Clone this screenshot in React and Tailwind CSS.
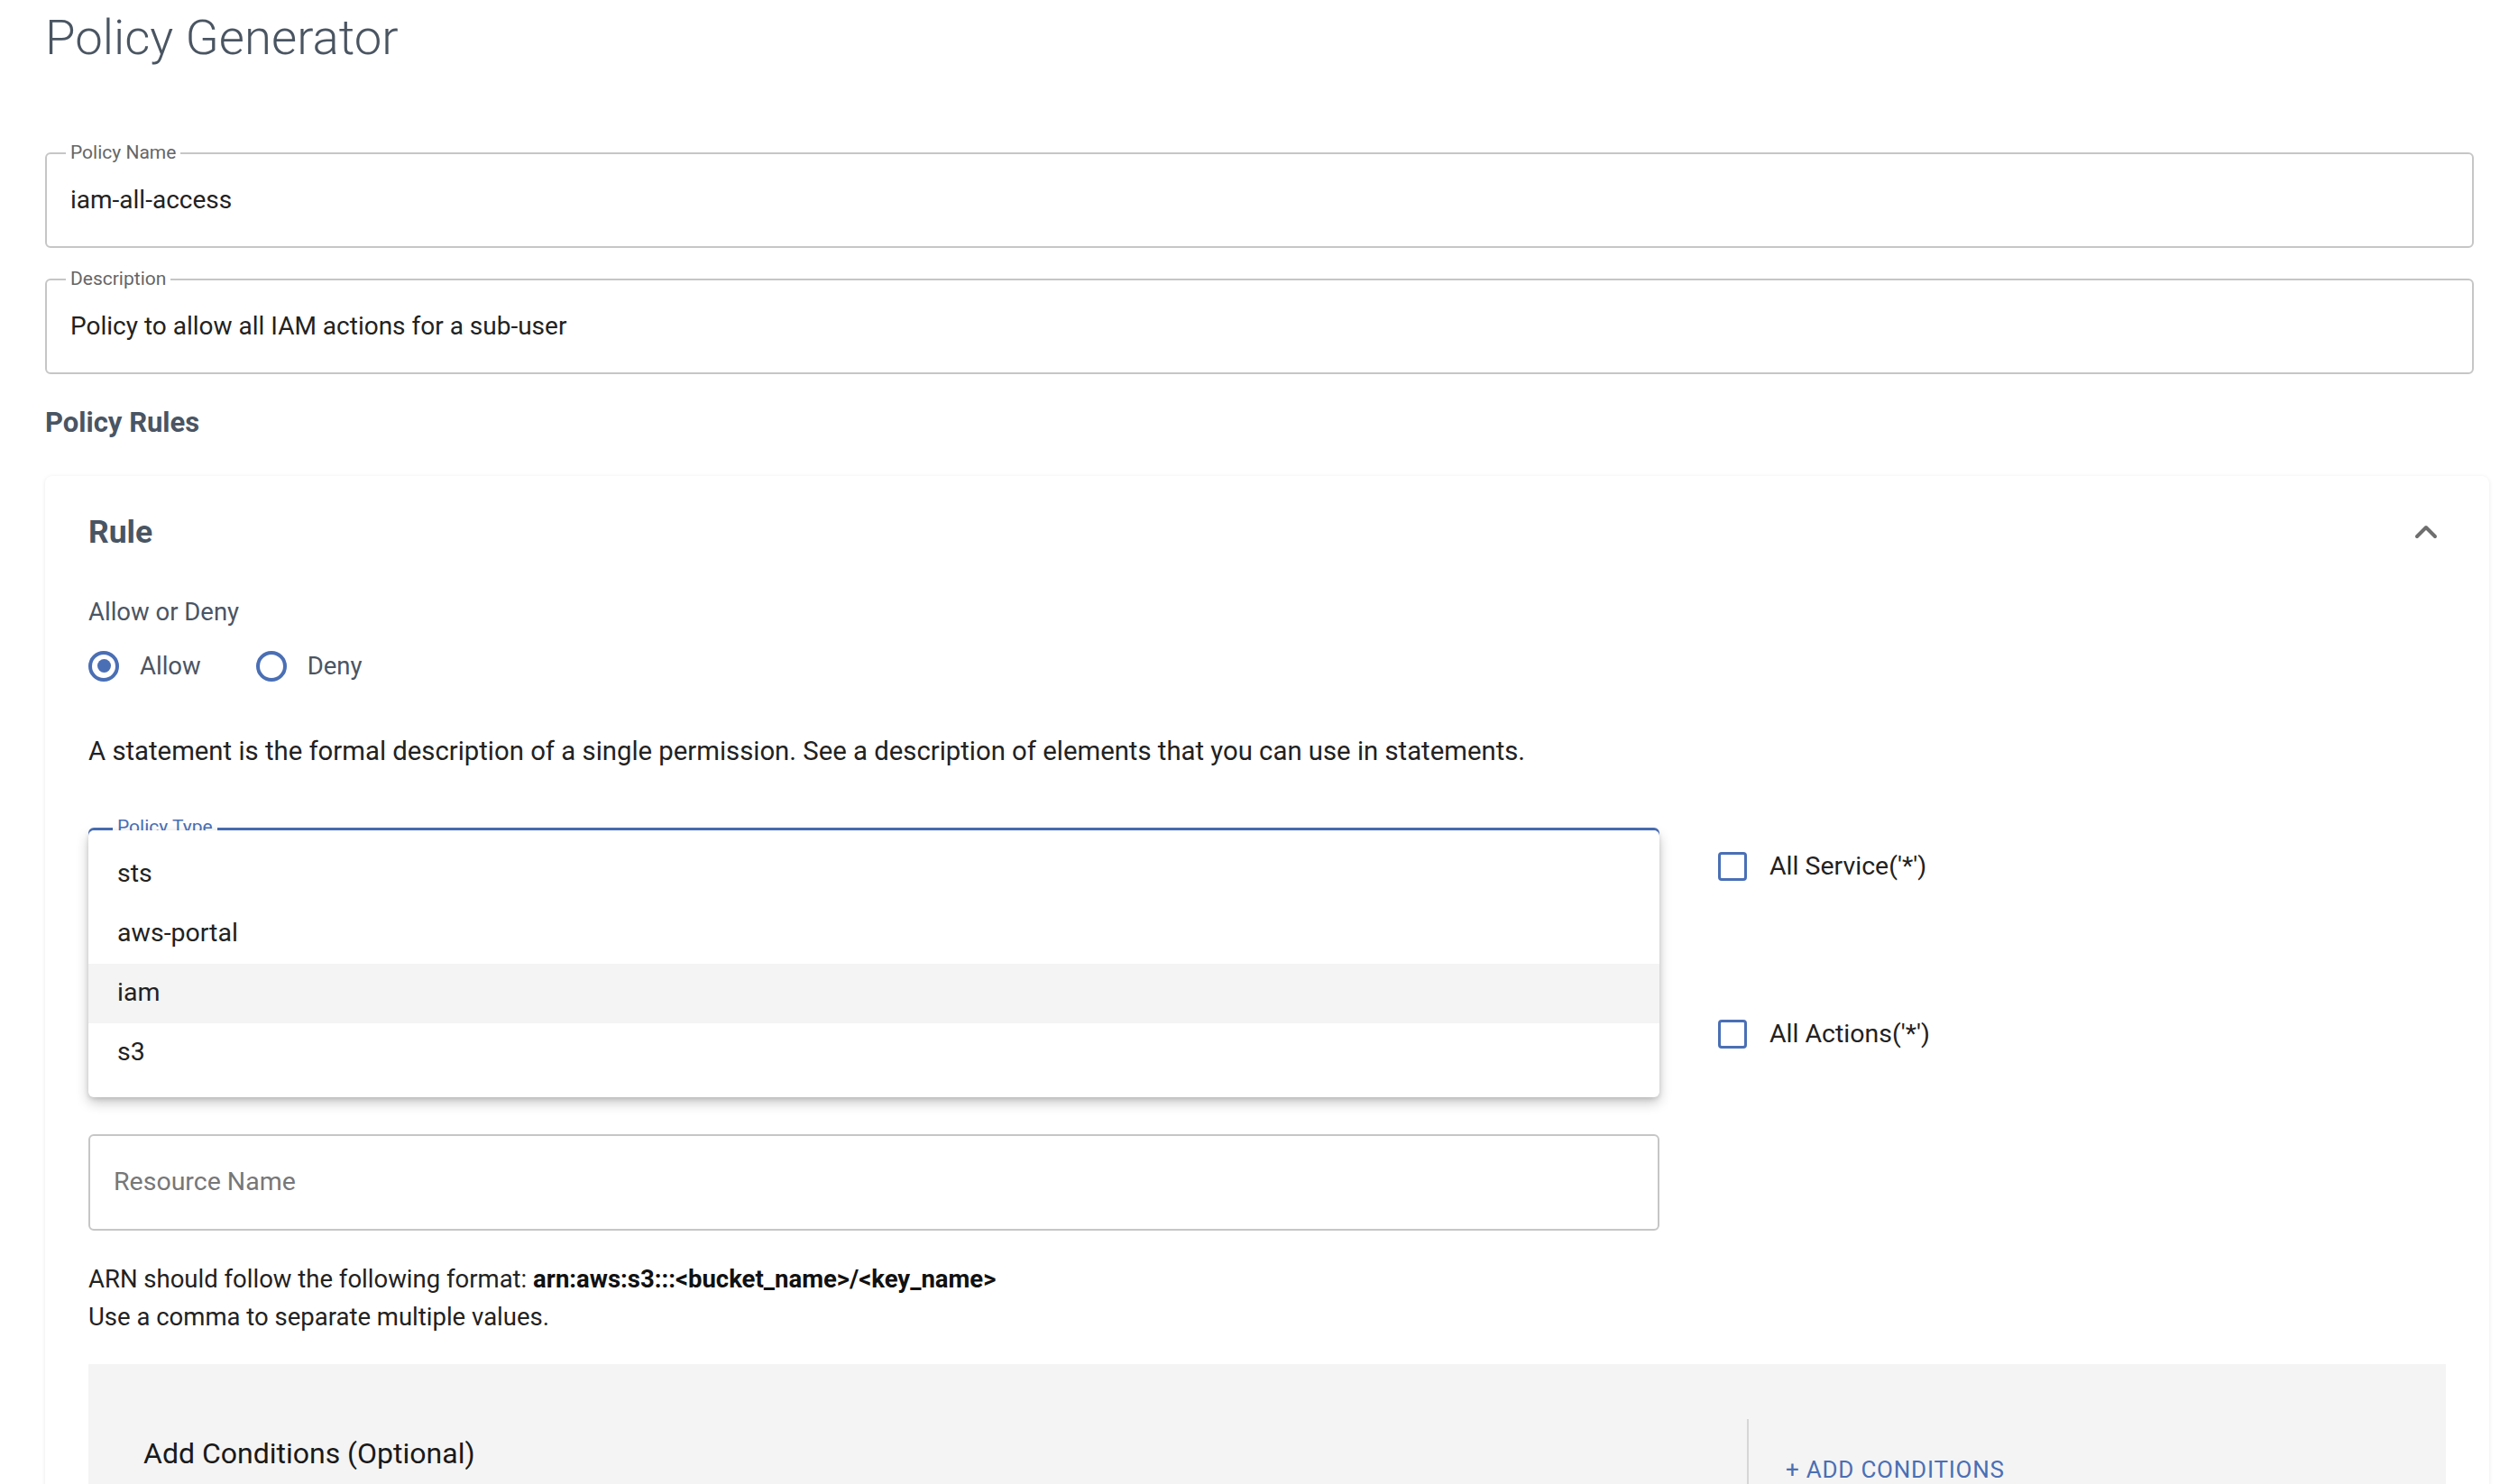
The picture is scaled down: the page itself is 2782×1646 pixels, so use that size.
import { ChevronUp } from 'lucide-react';

function OutlinedField({ label, value, placeholder, className = '' }) {
  return (
    <div className={`relative h-[106px] border-2 border-[#c6c6c6] rounded-[6px] flex items-center px-[26px] ${className}`}>
      {label && (
        <span className="absolute -top-[13px] left-[21px] bg-white px-[5px] text-[21px] leading-[22px] text-[#666]">
          {label}
        </span>
      )}
      {value ? (
        <span className="text-[28px] text-[#222]">{value}</span>
      ) : (
        <span className="text-[28.5px] text-[#777]">{placeholder}</span>
      )}
    </div>
  );
}

function Radio({ checked, label }) {
  return (
    <div className="flex items-center gap-[23px]">
      <span className="w-[34px] h-[34px] rounded-full border-[4px] border-[#4a6fb5] flex items-center justify-center">
        {checked && <span className="w-[15px] h-[15px] rounded-full bg-[#4a6fb5]" />}
      </span>
      <span className="text-[27.5px] leading-none text-[#4b5563]">{label}</span>
    </div>
  );
}

function Check({ label, className = '' }) {
  return (
    <div className={`flex items-center gap-[25px] ${className}`}>
      <span className="w-[32px] h-[32px] rounded-[4px] border-[3px] border-[#4a6fb5]" />
      <span className="text-[28.5px] leading-none text-[#222]">{label}</span>
    </div>
  );
}

export default function App() {
  const options = ['sts', 'aws-portal', 'iam', 's3'];

  return (
    <div className="min-h-screen bg-white pl-[50px] pr-[22px] font-['Roboto',sans-serif] overflow-hidden">
      <h1 className="pt-[17px] text-[54.5px] leading-[48px] font-light text-[#4a5562]">Policy Generator</h1>

      <div className="mr-[17px]">
        <OutlinedField className="mt-[104px]" label="Policy Name" value="iam-all-access" />
        <OutlinedField className="mt-[34px]" label="Description" value="Policy to allow all IAM actions for a sub-user" />
      </div>

      <h2 className="mt-[39px] text-[31px] leading-[30px] font-bold text-[#4a5563]">Policy Rules</h2>

      {/* Rule card */}
      <div className="mt-[44px] rounded-[8px] bg-white shadow-[0_1px_5px_rgba(0,0,0,0.09)] px-[48px] pt-[42px] pb-[40px]">
        <div className="flex items-center justify-between">
          <h3 className="text-[35.5px] leading-[33px] font-bold text-[#4a5563]">Rule</h3>
          <ChevronUp size={40} strokeWidth={2.4} color="#6f6f6f" className="mr-[2px]" />
        </div>

        <div className="mt-[55px] text-[27.5px] leading-none text-[#4b5563]">Allow or Deny</div>
        <div className="mt-[29px] flex items-center gap-[61px]">
          <Radio checked label="Allow" />
          <Radio label="Deny" />
        </div>

        <p className="mt-[63px] text-[29.3px] leading-none text-[#222]">
          A statement is the formal description of a single permission. See a description of elements that you can use in statements.
        </p>

        <div className="mt-[70px] flex gap-[65px]">
          <div className="w-[1742px] shrink-0">
            {/* Policy Type select, open */}
            <div className="relative h-[106px] border-[3px] border-[#4a6fb5] rounded-[6px]">
              <span className="absolute -top-[15px] left-[24px] bg-white px-[5px] text-[21px] leading-[22px] text-[#4a6fb5]">
                Policy Type
              </span>
              <div className="absolute top-0 -left-[3px] -right-[3px] z-10 bg-white rounded-[6px] shadow-[0_6px_14px_rgba(0,0,0,0.22),0_2px_5px_rgba(0,0,0,0.12)] py-[16px]">
                {options.map((o) => (
                  <div
                    key={o}
                    className={`h-[66px] flex items-center px-[32px] text-[28.5px] text-[#222] ${o === 'iam' ? 'bg-[#f4f4f4]' : ''}`}
                  >
                    {o}
                  </div>
                ))}
              </div>
            </div>
            {/* Actions select, under the menu */}
            <div className="mt-[80px] h-[106px] border-2 border-[#c6c6c6] rounded-[6px]" />
            <OutlinedField className="mt-[48px] h-[107px]" placeholder="Resource Name" />
          </div>

          <div className="flex flex-col">
            <Check className="mt-[27px]" label="All Service('*')" />
            <Check className="mt-[154px]" label="All Actions('*')" />
          </div>
        </div>

        <div className="mt-[33px] text-[27.5px] leading-[42px] text-[#222]">
          <div>
            ARN should follow the following format: <b className="font-bold text-[#111]">arn:aws:s3:::&lt;bucket_name&gt;/&lt;key_name&gt;</b>
          </div>
          <div>Use a comma to separate multiple values.</div>
        </div>

        {/* Conditions */}
        <div className="mt-[31px] h-[300px] bg-[#f4f4f4] flex">
          <div className="w-[1839px] shrink-0 pl-[61px] pt-[84px]">
            <div className="text-[32px] leading-[31px] text-[#1a1a1a]">Add Conditions (Optional)</div>
          </div>
          <div className="mt-[61px] border-l-2 border-[#d6d6d6] pl-[41px] pt-[44px]">
            <div className="text-[26px] leading-[25px] tracking-[0.03em] text-[#4a6fb5]">+ ADD CONDITIONS</div>
          </div>
        </div>
      </div>
    </div>
  );
}
